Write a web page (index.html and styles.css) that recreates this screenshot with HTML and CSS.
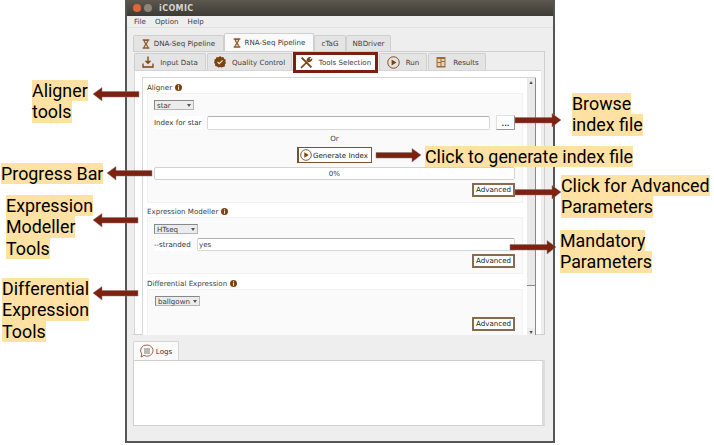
FILE: index.html
```html
<!DOCTYPE html>
<html lang="en">
<head>
    <meta charset="UTF-8">
    <title>iCOMIC Tools Selection</title>
    <link rel="stylesheet" href="styles.css">
</head>
<body>
    <svg width="0" height="0" class="defs">
        <symbol id="hourglass" viewBox="0 0 12 16">
            <path d="M1 1h10v2H9.500c0 3-2 4-2.500 5 .5 1 2.500 2 2.500 5H11v2H1v-2h1.500c0-3 2-4 2.500-5-.5-1-2.500-2-2.500-5H1z" fill="#8a5a30"/>
            <path d="M4 3.500h4L6 7zM3.800 13c.4-1.500 1.500-2.500 2.200-3 .7.500 1.800 1.500 2.200 3z" fill="#e6d3b5"/>
        </symbol>
        <symbol id="info" viewBox="0 0 8 8">
            <circle cx="4" cy="4" r="4" fill="#7a4312"/>
            <path d="M3.400 1.500h1.200v1H3.400zM3.400 3.200h1.200v3.300H3.400z" fill="#f4e4c8"/>
        </symbol>
        <symbol id="play" viewBox="0 0 14 14">
            <circle cx="7" cy="7" r="6.200" fill="none" stroke="#7a4312" stroke-width="1"/>
            <path d="M5 3.800 10.200 7 5 10.200z" fill="#7a4312"/>
        </symbol>
    </svg>

    <div class="window">
        <div class="titlebar">
            <span class="dot dot-close"></span>
            <span class="dot dot-min"></span>
            <span class="title">iCOMIC</span>
        </div>
        <div class="menubar">
            <span>File</span>
            <span>Option</span>
            <span>Help</span>
        </div>

        <div class="outer-tabs">
            <div class="outer-tab tab-dna"><svg class="ico-glass"><use href="#hourglass"/></svg>DNA-Seq Pipeline</div>
            <div class="outer-tab tab-rna active"><svg class="ico-glass"><use href="#hourglass"/></svg>RNA-Seq Pipeline</div>
            <div class="outer-tab tab-ctag">cTaG</div>
            <div class="outer-tab tab-nb">NBDriver</div>
        </div>

        <div class="outer-pane">
            <div class="inner-tabs">
                <div class="inner-tab tab-input">
                    <svg class="ico" viewBox="0 0 12 12"><path d="M6 .5v6.500M3.500 4.800 6 7.300l2.500-2.500M1 7.500v3.500h10V7.500" fill="none" stroke="#7a4312" stroke-width="1.300"/></svg>
                    Input Data
                </div>
                <div class="inner-tab tab-quality">
                    <svg class="ico" viewBox="0 0 12 12"><path d="M6 0l1.500 1.200 1.900-.2.700 1.800 1.700.9-.5 1.900.7 1.400-1.100 1.600-.1 1.900-1.900.4L7.600 11.500 6 11l-1.600.5-1.300-1.100-1.900-.4L1.100 8.100 0 6.500.7 5.100.2 3.700l1.700-.9.700-1.800 1.900.2z" fill="#7a4312"/><path d="M3.500 6 5.300 7.700 8.600 4.300" fill="none" stroke="#f4e4c8" stroke-width="1.200"/></svg>
                    Quality Control
                </div>
                <div class="inner-tab tab-tools">
                    <svg class="ico-tools" viewBox="0 0 12 12"><path d="M1.500 1.500 10.500 10.500" fill="none" stroke="#7a4312" stroke-width="1.800"/><path d="M1 11 6.500 5.500" fill="none" stroke="#7a4312" stroke-width="1.500"/><path d="M6 4.500C5.800 2.200 8 .2 10.500 1L8.800 2.700 9.500 3.500 11.300 1.800c.5 2.700-1.800 4.400-4 3.700z" fill="#7a4312"/></svg>
                    Tools Selection
                </div>
                <div class="inner-tab tab-run"><svg class="ico-play"><use href="#play"/></svg>Run</div>
                <div class="inner-tab tab-results">
                    <svg class="ico" viewBox="0 0 12 12"><rect x="1.500" y="1" width="9" height="10.500" fill="#9c6a3c"/><path d="M2.500 3h3v3h-3zM6.500 3h3v2h-3zM2.500 7h3v3h-3zM6.500 6h3v4h-3z" fill="#e6d3b5"/></svg>
                    Results
                </div>
            </div>

            <div class="inner-pane">
                <div class="scroll-area">
                    <div class="scroll-content">
                        <div class="group-label">Aligner <svg class="ico-info"><use href="#info"/></svg></div>
                        <div class="group group-aligner">
                            <div class="select select-star">star<i class="caret"></i></div>
                            <div class="row row-index">
                                <span class="row-label">Index for star</span>
                                <div class="text-input input-index"></div>
                                <div class="browse-btn">...</div>
                            </div>
                            <div class="or">Or</div>
                            <div class="generate-btn"><svg class="ico-gen"><use href="#play"/></svg>Generate Index</div>
                            <div class="progress">0%</div>
                            <div class="advanced-btn">Advanced</div>
                        </div>

                        <div class="group-label label-expr">Expression Modeller <svg class="ico-info"><use href="#info"/></svg></div>
                        <div class="group group-expr">
                            <div class="select select-htseq">HTseq<i class="caret"></i></div>
                            <div class="row row-stranded">
                                <span class="row-label">--stranded</span>
                                <div class="text-input input-yes">yes</div>
                            </div>
                            <div class="advanced-btn">Advanced</div>
                        </div>

                        <div class="group-label label-diff">Differential Expression <svg class="ico-info"><use href="#info"/></svg></div>
                        <div class="group group-diff">
                            <div class="select select-ballgown">ballgown<i class="caret"></i></div>
                            <div class="advanced-btn advanced-diff">Advanced</div>
                        </div>
                    </div>
                    <div class="scrollbar">
                        <div class="scroll-btn">&#9652;</div>
                        <div class="scroll-thumb"></div>
                        <div class="scroll-gap"></div>
                        <div class="scroll-btn">&#9662;</div>
                    </div>
                </div>
            </div>
        </div>

        <div class="logs-tabs">
            <div class="logs-tab">
                <svg class="ico-chat" viewBox="0 0 14 14"><path d="M7 1a6 5.600 0 1 1-3 10.400L1 13l.8-3A6 5.600 0 0 1 7 1z" fill="none" stroke="#9c6a3c" stroke-width="1"/><path d="M4 5h6M4 7h6M4 9h6" stroke="#555" stroke-width=".8"/></svg>
                Logs
            </div>
        </div>
        <div class="logs-pane"></div>
    </div>

    <div class="note note-aligner"><span>Aligner</span><span>tools</span></div>
    <div class="note note-progress"><span>Progress Bar</span></div>
    <div class="note note-expr"><span>Expression</span><span>Modeller</span><span>Tools</span></div>
    <div class="note note-diff"><span>Differential</span><span>Expression</span><span>Tools</span></div>
    <div class="note note-browse"><span>Browse</span><span>index file</span></div>
    <div class="note note-generate"><span>Click to generate index file</span></div>
    <div class="note note-advanced"><span>Click for Advanced</span><span>Parameters</span></div>
    <div class="note note-mandatory"><span>Mandatory</span><span>Parameters</span></div>

    <svg class="arrows" width="714" height="445" viewBox="0 0 714 445">
        <path d="M93 94l9-6.500v4h37v5.500h-37v4z"/>
        <path d="M107 173l9-6.500v4h36v5.500h-36v4z"/>
        <path d="M93 220l9-6.500v4h36v5.500h-36v4z"/>
        <path d="M93 293l9-6.500v4h36v5.500h-36v4z"/>
        <path d="M561 120l-9-6.500v4h-37v5.500h37v4z"/>
        <path d="M421 155l-9-6.500v4h-36v5.500h36v4z"/>
        <path d="M561 192l-9-6.500v4h-37v5.500h37v4z"/>
        <path d="M556 247l-9-6.500v4h-37v5.500h37v4z"/>
    </svg>
</body>
</html>
```

FILE: styles.css
```css
body {
    margin: 0;
    width: 714px;
    height: 445px;
    overflow: hidden;
    background: #fff;
    font-family: "DejaVu Sans", sans-serif;
    font-size: 7.1px;
    color: #3c3c3c;
    position: relative;
}

.defs {
    display: block;
}

/* window */
.window {
    box-sizing: border-box;
    width: 430px;
    height: 443px;
    margin-left: 125px;
    border: solid #555;
    border-width: 0 2px 2px;
    background: #eeeeee;
}

.titlebar {
    height: 16px;
    display: flex;
    align-items: center;
    padding-left: 6px;
    background: linear-gradient(#5c584f, #3e3b35);
}

.dot {
    width: 8px;
    height: 8px;
    border-radius: 50%;
    margin-right: 3px;
}

.dot-close {
    background: #e4643a;
}

.dot-min {
    background: #8a867d;
}

.title {
    margin-left: 4px;
    color: #d8d5cd;
    font-size: 8px;
    font-weight: bold;
    letter-spacing: .4px;
}

.menubar {
    height: 11px;
    display: flex;
    align-items: center;
    gap: 9px;
    padding-left: 7px;
    border-bottom: 1px solid #e2e2e2;
}

/* tabs */
.outer-tabs {
    height: 23px;
    margin-left: 6px;
    display: flex;
    align-items: flex-end;
}

.outer-tab {
    box-sizing: border-box;
    height: 16px;
    display: flex;
    align-items: center;
    justify-content: center;
    gap: 4px;
    background: #e4e4e4;
    border: 1px solid #cfcfcf;
    border-bottom: 0;
    border-radius: 2px 2px 0 0;
}

.outer-tab.active {
    height: 18px;
    background: #fafafa;
}

.tab-dna {
    width: 91px;
}

.tab-rna {
    width: 90px;
}

.tab-ctag {
    width: 32px;
}

.tab-nb {
    width: 45px;
}

.ico-glass {
    width: 8px;
    height: 12px;
}

.outer-pane {
    box-sizing: border-box;
    width: 412px;
    height: 284px;
    margin-left: 6px;
    padding: 1px 3px 0 1px;
    border: 1px solid #cfcfcf;
    border-left: 0;
}

.inner-tabs {
    height: 17px;
    display: flex;
    gap: 1px;
    position: relative;
}

.inner-tab {
    box-sizing: border-box;
    height: 17px;
    display: flex;
    align-items: center;
    justify-content: center;
    gap: 6px;
    background: #e4e4e4;
    border: 1px solid #cfcfcf;
    border-bottom: 0;
    border-radius: 2px 2px 0 0;
}

.tab-input {
    width: 72px;
}

.tab-quality {
    width: 85px;
}

.tab-tools {
    width: 85px;
    height: 21px;
    margin: -1px 0 -3px;
    background: #fff;
    border: 3px solid #7a1f12;
    border-radius: 0;
    position: relative;
    z-index: 1;
}

.tab-run {
    width: 48px;
}

.tab-results {
    width: 58px;
}

.ico {
    width: 12px;
    height: 12px;
}

.ico-tools {
    width: 13px;
    height: 13px;
}

.ico-play {
    width: 13px;
    height: 13px;
}

.inner-pane {
    box-sizing: border-box;
    height: 264px;
    padding: 6px 5px 0 7px;
    background: #fff;
    border-left: 1px solid #d6d6d6;
    border-top: 1px solid #d6d6d6;
}

.scroll-area {
    height: 257px;
    display: flex;
    border-top: 1px solid #d6d6d6;
    border-left: 1px solid #d6d6d6;
    overflow: hidden;
}

.scroll-content {
    width: 384px;
    padding-left: 4px;
    box-sizing: border-box;
    background: #fff;
}

.group-label {
    box-sizing: border-box;
    height: 15px;
    padding-bottom: 1px;
    display: flex;
    align-items: flex-end;
    gap: 3px;
}

.label-expr {
    height: 14px;
}

.ico-info {
    width: 7px;
    height: 7px;
    margin-bottom: 1px;
}

.group {
    box-sizing: border-box;
    width: 376px;
    padding: 6px 7px 0 6px;
    background: #fafafa;
    border: 1px solid #f2f2f2;
}

.group-aligner {
    height: 110px;
}

.group-expr {
    height: 57px;
}

.group-diff {
    height: 60px;
}

.select {
    box-sizing: border-box;
    height: 10px;
    display: flex;
    align-items: center;
    justify-content: space-between;
    padding: 0 2px;
    background: #ececec;
    border: 1px solid #b5b5b5;
    border-top-color: #888;
    border-left-color: #888;
}

.caret {
    width: 0;
    height: 0;
    border: 2px solid transparent;
    border-top: 3px solid #555;
    border-bottom: 0;
}

.select-star {
    width: 40px;
}

.select-htseq {
    width: 44px;
}

.select-ballgown {
    width: 45px;
    margin-left: 1px;
}

.row {
    display: flex;
    align-items: center;
}

.row-index {
    margin-top: 5px;
    height: 15px;
}

.row-stranded {
    margin-top: 4px;
    height: 13px;
}

.row-label {
    padding: 2px 0;
    background: #fff;
    color: #333;
}

.text-input {
    box-sizing: border-box;
    height: 14px;
    line-height: 12px;
    padding-left: 1px;
    background: #fff;
    border: 1px solid #d8d8d8;
    border-top-color: #b0b0b0;
    border-radius: 2px;
}

.input-index {
    width: 283px;
    margin-left: auto;
}

.input-yes {
    width: 318px;
    height: 13px;
    margin-left: auto;
}

.browse-btn {
    box-sizing: border-box;
    width: 19px;
    height: 15px;
    margin-left: 6px;
    text-align: center;
    line-height: 15px;
    font-weight: bold;
    background: #fff;
    border: 1px solid #e0e0e0;
    border-bottom-color: #999;
    border-right-color: #999;
}

.or {
    height: 13px;
    margin-top: 2px;
    line-height: 13px;
    text-align: center;
}

.generate-btn {
    box-sizing: border-box;
    width: 75px;
    height: 16px;
    margin: 2px auto 0;
    display: flex;
    align-items: center;
    gap: 1px;
    padding-left: 1px;
    background: #fff;
    border: 1px solid #7a5230;
    border-left-width: 2px;
    white-space: nowrap;
    color: #222;
}

.ico-gen {
    width: 12px;
    height: 12px;
    flex: none;
}

.progress {
    box-sizing: border-box;
    height: 13px;
    margin-top: 4px;
    line-height: 11px;
    text-align: center;
    background: #fff;
    border: 1px solid #d2d2d2;
    border-radius: 2px;
}

.advanced-btn {
    box-sizing: border-box;
    width: 43px;
    height: 14px;
    margin: 3px 0 0 auto;
    line-height: 10px;
    text-align: center;
    color: #222;
    background: #fff;
    border: 2px solid #8a6a4c;
}

.advanced-diff {
    margin-top: 11px;
}

/* scrollbar */
.scrollbar {
    width: 8px;
    display: flex;
    flex-direction: column;
    background: #e6e6e6;
    border-right: 1px solid #888;
    margin-left: auto;
}

.scroll-btn {
    height: 7px;
    line-height: 7px;
    font-size: 6px;
    text-align: center;
    color: #444;
    background: #ececec;
}

.scroll-thumb {
    height: 200px;
    background: #e9e9e9;
    border-bottom: 1px solid #888;
}

.scroll-gap {
    flex: 1;
    background: #f4f4f4;
}

/* logs */
.logs-tabs {
    height: 25px;
    margin-left: 6px;
    display: flex;
    align-items: flex-end;
}

.logs-tab {
    box-sizing: border-box;
    width: 46px;
    height: 19px;
    display: flex;
    align-items: center;
    justify-content: center;
    gap: 2px;
    background: #fafafa;
    border: 1px solid #d6d6d6;
    border-bottom: 0;
    border-radius: 2px 2px 0 0;
    color: #333;
}

.ico-chat {
    width: 14px;
    height: 14px;
}

.logs-pane {
    box-sizing: border-box;
    width: 412px;
    height: 66px;
    margin-left: 6px;
    background: #fff;
    border: 1px solid #cfcfcf;
    border-right-width: 3px;
    border-right-color: #dcdcdc;
}

/* annotations lying over the picture */
.note {
    position: absolute;
    font-family: Roboto, sans-serif;
    font-size: 17.85px;
    line-height: 21.300px;
    color: #000;
}

.note span {
    display: table;
    background: #ffe2a3;
    white-space: nowrap;
}

.note-aligner {
    left: 32px;
    top: 80px;
}

.note-progress {
    left: 1px;
    top: 163px;
}

.note-expr {
    left: 6px;
    top: 195px;
}

.note-diff {
    left: 2px;
    top: 278px;
}

.note-browse {
    left: 572px;
    top: 93px;
}

.note-generate {
    left: 425px;
    top: 146px;
}

.note-advanced {
    left: 561px;
    top: 175px;
}

.note-mandatory {
    left: 560px;
    top: 230px;
}

.arrows {
    position: absolute;
    left: 0;
    top: 0;
}

.arrows path {
    fill: #7d2210;
    stroke: #8a7a74;
    stroke-width: .5;
}
```
